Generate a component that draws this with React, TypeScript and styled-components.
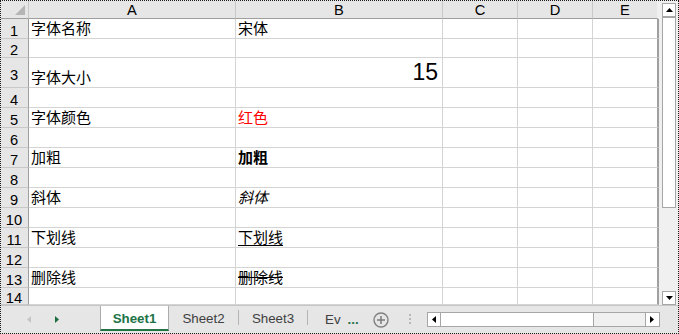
import React from "react";
import styled, { createGlobalStyle } from "styled-components";

const GlobalStyle = createGlobalStyle`
  html, body { margin: 0; padding: 0; background: #fff; }
  body { font-family: "Liberation Sans", Arial, sans-serif; }
  *, *::before, *::after { box-sizing: border-box; }
`;

const CJK = `"Noto Sans CJK SC", "Liberation Sans", sans-serif`;
const GREEN = "#217346";

const Frame = styled.div`
  width: 679px;
  height: 334px;
  border: 1px dotted #1a1a1a;
  display: flex;
  flex-direction: column;
  background: #e6e6e6;
  overflow: hidden;
`;

const Main = styled.div`
  display: flex;
  height: 304px;
  flex: none;
`;

const Grid = styled.div`
  display: grid;
  grid-template-columns: 28px 207px 207px 75px 75px 66px;
  grid-template-rows: 18px 20px 19px 30px repeat(10, 20px) 17px;
  width: 658px;
  height: 304px;
  overflow: hidden;
  background: #fff;
  flex: none;
`;

const Corner = styled.div`
  background: #e6e6e6;
  border-right: 1px solid #c8c8c8;
  border-bottom: 1px solid #9e9e9e;
  display: flex;
  align-items: flex-end;
  justify-content: flex-end;
  padding: 0 3px 3px 0;
`;

const ColHeader = styled.div<{ $last?: boolean }>`
  background: #e6e6e6;
  border-right: ${(p) => (p.$last ? "2px solid #f0f0f0" : "1px solid #c8c8c8")};
  border-bottom: 1px solid #9e9e9e;
  display: flex;
  align-items: center;
  justify-content: center;
  font-size: 14.67px;
  line-height: 16px;
  color: #000;
  padding-top: 1px;
`;

const RowHeader = styled.div`
  background: #e6e6e6;
  border-right: 1px solid #9e9e9e;
  border-bottom: 1px solid #c8c8c8;
  display: flex;
  align-items: center;
  justify-content: center;
  font-size: 14.67px;
  line-height: 16px;
  color: #000;
  padding: 4px 1px 0 0;
`;

const Cell = styled.div<{ $right?: boolean; $last?: boolean }>`
  border-right: ${(p) => (p.$last ? "2px solid #a0a0a0" : "1px solid #d4d4d4")};
  border-bottom: 1px solid #d4d4d4;
  display: flex;
  align-items: flex-end;
  justify-content: ${(p) => (p.$right ? "flex-end" : "flex-start")};
  padding: 0 ${(p) => (p.$right ? "4px" : "2px")} 2px 2px;
  font-family: ${CJK};
  font-size: 15px;
  line-height: 17px;
  color: #000;
  white-space: nowrap;
  min-width: 0;
`;

const RedText = styled.span`
  color: #ff0000;
`;
const BoldText = styled.span`
  font-weight: 700;
`;
const ItalicText = styled.span`
  font-style: italic;
`;
const UnderlineText = styled.span`
  text-decoration: underline;
  text-underline-offset: 2px;
`;
const StrikeText = styled.span`
  text-decoration: line-through;
`;
const BigNumber = styled.span`
  font-family: "Liberation Sans", Arial, sans-serif;
  font-size: 23px;
  line-height: 25px;
`;

const VScroll = styled.div`
  width: 19px;
  flex: none;
  background: #f0f0f0;
  display: flex;
  flex-direction: column;
  padding: 2px 2px 0 3px;
`;

const ScrollButton = styled.div`
  width: 14px;
  height: 14px;
  flex: none;
  background: #fff;
  border: 1px solid #a6a6a6;
  display: flex;
  align-items: center;
  justify-content: center;
`;

const VThumb = styled.div`
  height: 191px;
  flex: none;
  background: #fff;
  border: 1px solid #a6a6a6;
`;

const Spacer = styled.div`
  flex: 1;
`;

const TabBar = styled.div`
  height: 28px;
  flex: none;
  display: flex;
  align-items: center;
  border-top: 1px solid #c6c6c6;
  background: #e6e6e6;
`;

const Nav = styled.div`
  width: 99px;
  flex: none;
  display: flex;
  align-items: center;
  padding-left: 26px;
  gap: 24px;
`;

const Tab = styled.div<{ $active?: boolean; $w: number }>`
  align-self: flex-start;
  width: ${(p) => p.$w}px;
  height: 25px;
  flex: none;
  display: flex;
  align-items: center;
  justify-content: center;
  font-size: 13.33px;
  font-weight: ${(p) => (p.$active ? 700 : 400)};
  color: ${(p) => (p.$active ? GREEN : "#404040")};
  background: ${(p) => (p.$active ? "#fff" : "transparent")};
  border-left: ${(p) => (p.$active ? "1px solid #ababab" : "none")};
  border-right: ${(p) => (p.$active ? "1px solid #ababab" : "none")};
  border-bottom: 2px solid ${(p) => (p.$active ? GREEN : "transparent")};
  padding-top: 1px;
`;

const TabSep = styled.div`
  width: 1px;
  height: 15px;
  flex: none;
  align-self: flex-start;
  margin-top: 4px;
  background: #b4b4b4;
`;

const PartialTab = styled.div`
  font-size: 13.33px;
  color: #404040;
  padding-left: 17px;
  margin-top: -1px;
  flex: none;
`;

const MoreDots = styled.div`
  font-size: 13.33px;
  font-weight: 700;
  color: ${GREEN};
  margin-left: 7px;
  margin-top: -1px;
  flex: none;
`;

const AddButton = styled.div`
  width: 16px;
  height: 16px;
  margin-left: 14px;
  flex: none;
  display: flex;
`;

const Grip = styled.div`
  width: 2px;
  height: 12px;
  margin-left: 20px;
  flex: none;
  background: repeating-linear-gradient(
    to bottom,
    #b8b8b8 0px,
    #b8b8b8 2px,
    transparent 2px,
    transparent 4px
  );
`;

const HScroll = styled.div`
  width: 233px;
  height: 15px;
  margin-left: 16px;
  flex: none;
  display: flex;
  border: 1px solid #a6a6a6;
  background: #f0f0f0;
`;

const HButton = styled.div<{ $side: "left" | "right" }>`
  width: ${(p) => (p.$side === "left" ? 13 : 14)}px;
  flex: none;
  background: #fff;
  border-right: ${(p) => (p.$side === "left" ? "1px solid #a6a6a6" : "none")};
  border-left: ${(p) => (p.$side === "right" ? "1px solid #a6a6a6" : "none")};
  display: flex;
  align-items: center;
  justify-content: center;
`;

const HThumb = styled.div`
  width: 153px;
  flex: none;
  background: #fff;
  border-right: 1px solid #a6a6a6;
`;

const Tri = ({ dir, color = "#000" }: { dir: "up" | "down" | "left" | "right"; color?: string }) => {
  if (dir === "up")
    return (
      <svg width="7" height="4" viewBox="0 0 7 4">
        <polygon points="0,4 3.5,0 7,4" fill={color} />
      </svg>
    );
  if (dir === "down")
    return (
      <svg width="7" height="4" viewBox="0 0 7 4">
        <polygon points="0,0 7,0 3.5,4" fill={color} />
      </svg>
    );
  if (dir === "left")
    return (
      <svg width="4" height="7" viewBox="0 0 4 7">
        <polygon points="4,0 4,7 0,3.5" fill={color} />
      </svg>
    );
  return (
    <svg width="4" height="7" viewBox="0 0 4 7">
      <polygon points="0,0 4,3.5 0,7" fill={color} />
    </svg>
  );
};

type Row = { n: number; a?: React.ReactNode; b?: React.ReactNode; bRight?: boolean };

const rows: Row[] = [
  { n: 1, a: "字体名称", b: "宋体" },
  { n: 2 },
  { n: 3, a: "字体大小", b: <BigNumber>15</BigNumber>, bRight: true },
  { n: 4 },
  { n: 5, a: "字体颜色", b: <RedText>红色</RedText> },
  { n: 6 },
  { n: 7, a: "加粗", b: <BoldText>加粗</BoldText> },
  { n: 8 },
  { n: 9, a: "斜体", b: <ItalicText>斜体</ItalicText> },
  { n: 10 },
  { n: 11, a: "下划线", b: <UnderlineText>下划线</UnderlineText> },
  { n: 12 },
  { n: 13, a: "删除线", b: <StrikeText>删除线</StrikeText> },
  { n: 14 },
];

const columns = ["A", "B", "C", "D", "E"];

export default function App() {
  return (
    <>
      <GlobalStyle />
      <Frame>
        <Main>
          <Grid>
            <Corner>
              <svg width="10" height="10" viewBox="0 0 10 10">
                <polygon points="10,0 10,10 0,10" fill="#b5b5b5" />
              </svg>
            </Corner>
            {columns.map((c, i) => (
              <ColHeader key={c} $last={i === columns.length - 1}>
                {c}
              </ColHeader>
            ))}
            {rows.map((r) => (
              <React.Fragment key={r.n}>
                <RowHeader>{r.n}</RowHeader>
                <Cell>{r.a}</Cell>
                <Cell $right={r.bRight}>{r.b}</Cell>
                <Cell />
                <Cell />
                <Cell $last />
              </React.Fragment>
            ))}
          </Grid>
          <VScroll>
            <ScrollButton>
              <Tri dir="up" />
            </ScrollButton>
            <VThumb />
            <Spacer />
            <ScrollButton>
              <Tri dir="down" />
            </ScrollButton>
          </VScroll>
        </Main>
        <TabBar>
          <Nav>
            <Tri dir="left" color="#c4c4c4" />
            <Tri dir="right" color="#1d6b40" />
          </Nav>
          <Tab $active $w={69}>Sheet1</Tab>
          <Tab $w={69}>Sheet2</Tab>
          <TabSep />
          <Tab $w={68}>Sheet3</Tab>
          <TabSep />
          <PartialTab>Ev</PartialTab>
          <MoreDots>...</MoreDots>
          <AddButton>
            <svg width="16" height="16" viewBox="0 0 16 16">
              <circle cx="8" cy="8" r="7" fill="none" stroke="#808080" strokeWidth="1.4" />
              <line x1="4" y1="8" x2="12" y2="8" stroke="#808080" strokeWidth="1.6" />
              <line x1="8" y1="4" x2="8" y2="12" stroke="#808080" strokeWidth="1.6" />
            </svg>
          </AddButton>
          <Grip />
          <HScroll>
            <HButton $side="left">
              <Tri dir="left" />
            </HButton>
            <HThumb />
            <Spacer />
            <HButton $side="right">
              <Tri dir="right" />
            </HButton>
          </HScroll>
        </TabBar>
      </Frame>
    </>
  );
}
